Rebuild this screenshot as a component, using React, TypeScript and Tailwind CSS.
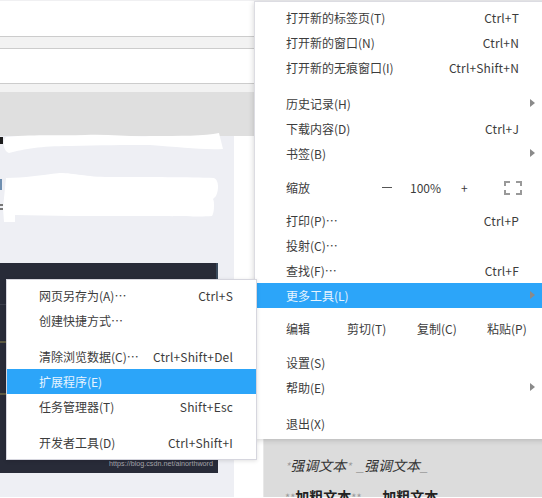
import React from "react";

const font = { fontFamily: '"Noto Sans CJK SC", "Noto Sans", sans-serif' };

function Row({ label, shortcut, arrow, active, inset }: { label: string; shortcut?: string; arrow?: boolean; active?: boolean; inset?: boolean }) {
  return (
    <div className={`h-[25px] flex items-center justify-between pr-[23px] relative whitespace-nowrap ${inset ? "pl-[31px]" : "pl-[32px]"} ${active ? "bg-[#2ca5f9] text-[#e6f4ff]" : ""}`}>
      <span>{label}</span>
      {shortcut && <span className="tracking-[0.17px]">{shortcut}</span>}
      {arrow && (
        <span className="absolute right-[7px] top-[8px] w-0 h-0 border-y-[4px] border-y-transparent border-l-[5px] border-l-[#8a8a8a]" />
      )}
    </div>
  );
}

function Scribbles() {
  return (
    <svg className="absolute left-0 top-0" width="242" height="240" viewBox="0 0 242 240" fill="none">
      <path d="M0 137H3V144H0Z" fill="#1c1c1c" />
      <path d="M0 179H2V190H0Z" fill="#6f8fb0" />
      <path d="M0 204H3V206H0ZM0 208H3V210H0Z" fill="#777" />
      <path
        d="M6 137C40 134 60 136 85 135C110 134 130 137 150 136C180 136 205 136 219 133L223 149C200 150 180 147 150 145C125 145 100 145 70 146C40 146 25 149 9 153C3 151 2 141 6 137Z"
        fill="#fff"
      />
      <path
        d="M6 178C25 178 40 175 60 173C75 173 85 177 110 177C150 177 190 177 214 178C219 180 219 190 216 196L213 199C215 202 214 214 212 216C200 217 190 216 140 216C90 216 50 216 15 215L15 222L4 222L3 208Z"
        fill="#fff"
      />
    </svg>
  );
}

export default function App() {
  return (
    <div className="relative w-[542px] h-[498px] overflow-hidden bg-white text-[12px] text-[#3c3c3c]" style={font}>
      {/* browser chrome behind the menus */}
      <div className="h-[1px] bg-[#f0f0f2]" />
      <div className="h-[36px] bg-white border-b border-[#cccccc]" />
      <div className="h-[12px] bg-[#f2f2f2] border-b border-[#cccccc]" />
      <div className="h-[35px] bg-white border-b border-[#cccccc]" />
      <div className="h-[8px] bg-[#f2f2f2]" />
      <div className="h-[44px] bg-[#dfdfdf]" />

      <div className="flex h-[361px]">
        <div className="w-[234px] bg-[#eeeff4] pt-[127px]">
          <div className="relative w-[218px] h-[210px] bg-[#282b38]">
            <div className="h-[42px] border-b border-[#3b3e4b]" />
            <span className="absolute left-0 top-[78px] w-[6px] h-[2px] bg-[#5c5a42]" />
            <span className="absolute left-0 top-[130px] w-[6px] h-[2px] bg-[#5c5a42]" />
            <span className="absolute right-0 top-0 w-[2px] h-[20px] bg-[#3a4a5c]" />
            <span className="absolute right-[5px] bottom-[3px] text-[7.2px] leading-[12px] text-[#a4a4aa] whitespace-nowrap" style={{ fontFamily: '"Liberation Sans", sans-serif' }}>
              https://blog.csdn.net/ainorthword
            </span>
          </div>
        </div>
        <div className="w-[29px] bg-white" />
        <div className="flex-1 bg-[#dcdcdc] pl-[21px] pt-[318px] text-[14px] leading-[22px] text-[#333333] border-l border-[#e8e8e8]">
          <div className="italic whitespace-nowrap">
            <span className="text-[#9a9a9a] text-[11px]">*</span>强调文本<span className="text-[#9a9a9a] text-[11px]">*</span>
            <span className="text-[#9a9a9a] ml-[5px]">_</span>强调文本<span className="text-[#9a9a9a]">_</span>
          </div>
          <div className="font-bold whitespace-nowrap mt-[8px] text-[#222222]">
            <span className="text-[#9a9a9a] text-[11px] font-normal">**</span>加粗文本<span className="text-[#9a9a9a] text-[11px] font-normal">**</span>
            <span className="text-[#9a9a9a] font-normal ml-[5px]">__</span>加粗文本
          </div>
        </div>
      </div>

      <Scribbles />

      {/* main menu */}
      <div className="absolute left-[254px] top-[1px] w-[300px] h-[438px] bg-white border-l border-t border-[#dcdce2] pt-[3px] shadow-[0_1px_6px_rgba(0,0,0,0.18)] pr-[12px]">
        <Row inset label="打开新的标签页(T)" shortcut="Ctrl+T" />
        <Row inset label="打开新的窗口(N)" shortcut="Ctrl+N" />
        <Row inset label="打开新的无痕窗口(I)" shortcut="Ctrl+Shift+N" />
        <div className="h-[11px]" />
        <Row inset label="历史记录(H)" arrow />
        <Row inset label="下载内容(D)" shortcut="Ctrl+J" />
        <Row inset label="书签(B)" arrow />
        <div className="h-[9px]" />
        <div className="h-[25px] flex items-center pl-[31px] relative whitespace-nowrap">
          <span>缩放</span>
          <span className="ml-[72px] w-[10px] h-[1px] bg-[#555555]" />
          <span className="ml-[18px]">100%</span>
          <span className="ml-[20px]">+</span>
          <svg className="ml-[36px]" width="18" height="14" viewBox="0 0 18 14" fill="none" stroke="#999999" strokeWidth="2">
            <path d="M1 5V1H6M12 1H17V5M17 9V13H12M6 13H1V9" />
          </svg>
        </div>
        <div className="h-[8px]" />
        <Row inset label="打印(P)…" shortcut="Ctrl+P" />
        <Row inset label="投射(C)…" />
        <Row inset label="查找(F)…" shortcut="Ctrl+F" />
        <Row inset label="更多工具(L)" arrow active />
        <div className="h-[8px]" />
        <div className="h-[25px] flex items-center pl-[31px] relative whitespace-nowrap">
          <span className="w-[61px]">编辑</span>
          <span className="w-[70px]">剪切(T)</span>
          <span className="w-[70px]">复制(C)</span>
          <span>粘贴(P)</span>
        </div>
        <div className="h-[9px]" />
        <Row inset label="设置(S)" />
        <Row inset label="帮助(E)" arrow />
        <div className="h-[11px]" />
        <Row inset label="退出(X)" />
      </div>

      {/* more tools submenu */}
      <div className="absolute left-[6px] top-[279px] w-[251px] h-[181px] bg-white border border-[#d6d6de] pt-[3px] shadow-[0_1px_4px_rgba(0,0,0,0.12)]">
        <Row label="网页另存为(A)…" shortcut="Ctrl+S" />
        <Row label="创建快捷方式…" />
        <div className="h-[11px]" />
        <Row label="清除浏览数据(C)…" shortcut="Ctrl+Shift+Del" />
        <Row label="扩展程序(E)" active />
        <Row label="任务管理器(T)" shortcut="Shift+Esc" />
        <div className="h-[11px]" />
        <Row label="开发者工具(D)" shortcut="Ctrl+Shift+I" />
      </div>
    </div>
  );
}
